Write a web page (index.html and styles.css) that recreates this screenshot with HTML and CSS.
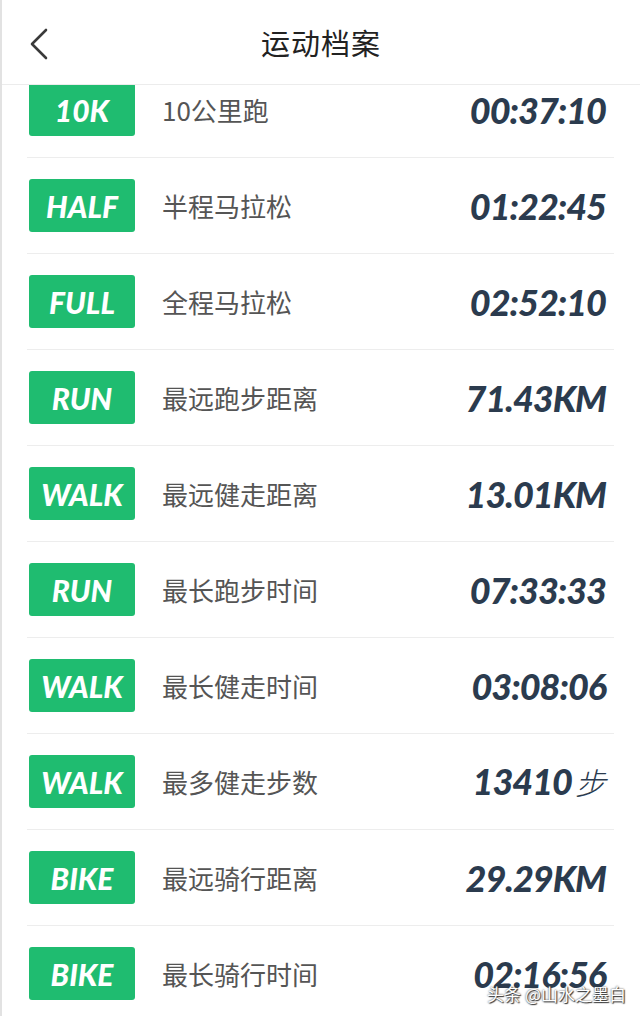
FILE: index.html
```html
<!doctype html>
<html>
<head>
<meta charset="utf-8">
<title>运动档案</title>
<meta name=viewport content="width=device-width, initial-scale=1">
<link rel="stylesheet" href="styles.css">
</head>
<body>
<div class=page>

<div class=header>
    <svg class=back width="24" height="36" viewBox="0 0 24 36">
        <polyline points="17,4 3,18 17,32" fill="none" stroke="#3a3a3a" stroke-width="2.6" stroke-linecap="round" stroke-linejoin="round"/>
    </svg>
    <h1>运动档案</h1>
</div>

<div class=list>
<div class=inner>

<div class=row><span class=badge>10K</span><span class=label>10公里跑</span><span class=value>00:37:10</span></div>
<div class=row><span class=badge>HALF</span><span class=label>半程马拉松</span><span class=value>01:22:45</span></div>
<div class=row><span class=badge>FULL</span><span class=label>全程马拉松</span><span class=value>02:52:10</span></div>
<div class=row><span class=badge>RUN</span><span class=label>最远跑步距离</span><span class=value>71.43KM</span></div>
<div class=row><span class=badge>WALK</span><span class=label>最远健走距离</span><span class=value>13.01KM</span></div>
<div class=row><span class=badge>RUN</span><span class=label>最长跑步时间</span><span class=value>07:33:33</span></div>
<div class=row><span class=badge>WALK</span><span class=label>最长健走时间</span><span class=value>03:08:06</span></div>
<div class=row><span class=badge>WALK</span><span class=label>最多健走步数</span><span class=value>13410<span class=unit>步</span></span></div>
<div class=row><span class=badge>BIKE</span><span class=label>最远骑行距离</span><span class=value>29.29KM</span></div>
<div class=row><span class=badge>BIKE</span><span class=label>最长骑行时间</span><span class=value>02:16:56</span></div>

</div>
</div>

<div class=mark>头条 @山水之墨白</div>

</div>
</body>
</html>
```

FILE: styles.css
```css
html, body {
    margin: 0;
    padding: 0;
    background-color: white;
}
body {
    font-family: "Noto Sans CJK SC", "Noto Sans", sans-serif;
}
.page {
    position: relative;
    height: 1016px;
    overflow: hidden;
    border-left: 2px solid #e2e2e2;
    box-sizing: border-box;
}
.header {
    position: relative;
    height: 84px;
    border-bottom: 1px solid #ececec;
    display: flex;
    align-items: center;
    justify-content: center;
}
.header h1 {
    margin: 0;
    font-size: 29px;
    font-weight: 400;
    color: #222;
    letter-spacing: 1px;
}
.back {
    position: absolute;
    left: 27px;
    top: 26px;
}
.list {
    height: 931px;
    overflow: hidden;
}
.inner {
    margin-top: -23px;
}
.row {
    display: flex;
    align-items: center;
    height: 95px;
    margin-left: 25px;
    margin-right: 26px;
    border-bottom: 1px solid #ededed;
    padding-left: 2px;
}
.badge {
    width: 106px;
    height: 53px;
    border-radius: 3px;
    background-color: #1fbc70;
    color: white;
    font-family: "Lato", sans-serif;
    font-weight: 900;
    font-style: italic;
    font-size: 30px;
    display: flex;
    align-items: center;
    justify-content: center;
}
.label {
    margin-left: 27px;
    font-size: 26px;
    color: #555;
    flex: 1;
}
.value {
    font-family: "Lato", sans-serif;
    font-weight: 900;
    font-style: italic;
    font-size: 36px;
    color: #2b3b4e;
    padding-right: 8px;
    letter-spacing: -1px;
}
.unit {
    font-family: "Noto Sans CJK SC", sans-serif;
    font-weight: 300;
    font-style: italic;
    font-size: 31px;
    margin-left: 3px;
    letter-spacing: 0;
}
.mark {
    position: absolute;
    right: 14px;
    bottom: 10px;
    font-size: 17px;
    color: white;
    text-shadow: 0 0 2px #333, 1px 1px 1px #333;
}
```
